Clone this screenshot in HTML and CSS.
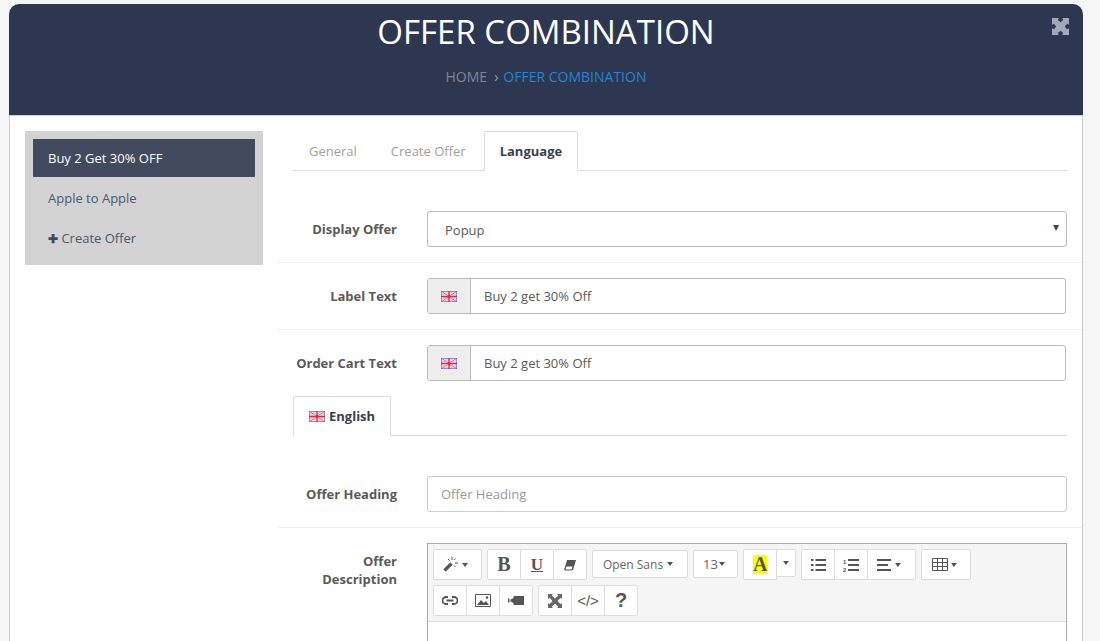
FILE: index.html
```html
<!DOCTYPE html>
<html lang="en">
<head>
<meta charset="utf-8">
<title>Offer Combination</title>
<link rel="stylesheet" href="styles.css">
</head>
<body>
<svg class="defs" width="0" height="0" aria-hidden="true">
  <symbol id="flag" viewBox="0 0 16 11">
    <rect width="16" height="11" fill="#cfcdf0"/>
    <path d="M0 0L16 11M16 0L0 11" stroke="#f3f0fa" stroke-width="2.2"/>
    <path d="M0 0L16 11M16 0L0 11" stroke="#e8485c" stroke-width=".9"/>
    <path d="M8 0V11M0 5.5H16" stroke="#fbe8ea" stroke-width="2.600"/>
    <path d="M8 0V11M0 5.5H16" stroke="#f02236" stroke-width="1.400"/>
    <circle cx="8" cy="5.500" r="1.800" fill="#f02236"/>
    <rect x=".5" y=".5" width="15" height="10" fill="none" stroke="#4a4ac0" stroke-dasharray="1 1"/>
  </symbol>
  <symbol id="expand" viewBox="0 0 14 14">
    <path d="M0 0H5.500L4.800 1.700 7 3.400 9.200 1.700 8.500 0H14V5.500L12.300 4.800 10.600 7 12.300 9.200 14 8.500V14H8.500L9.200 12.300 7 10.600 4.800 12.300 5.500 14H0V8.500L1.700 9.200 3.400 7 1.700 4.800 0 5.500Z"/>
  </symbol>
</svg>
<div class="page">
  <header class="hero">
    <h1 class="hero-title">OFFER COMBINATION</h1>
    <nav class="crumbs"><span class="crumb-home">HOME</span><span class="crumb-sep">›</span><span class="crumb-now">OFFER COMBINATION</span></nav>
    <svg class="hero-expand"><use href="#expand"/></svg>
  </header>
  <main class="panel">
    <aside class="side">
      <a class="side-item side-active">Buy 2 Get 30% OFF</a>
      <a class="side-item">Apple to Apple</a>
      <a class="side-item"><b class="plus">✚</b> Create Offer</a>
    </aside>
    <section class="content">
      <div class="tabs tabs-main">
        <span class="tab">General</span>
        <span class="tab">Create Offer</span>
        <span class="tab tab-on">Language</span>
      </div>
      <div class="row row-first">
        <label class="lbl">Display Offer</label>
        <div class="select">Popup<span class="select-caret">▾</span></div>
      </div>
      <div class="row">
        <label class="lbl">Label Text</label>
        <div class="group">
          <span class="addon"><svg class="flag"><use href="#flag"/></svg></span>
          <span class="group-input">Buy 2 get 30% Off</span>
        </div>
      </div>
      <div class="row row-plain">
        <label class="lbl">Order Cart Text</label>
        <div class="group">
          <span class="addon"><svg class="flag"><use href="#flag"/></svg></span>
          <span class="group-input">Buy 2 get 30% Off</span>
        </div>
      </div>
      <div class="tabs tabs-lang">
        <span class="tab tab-on tab-lang"><svg class="flag"><use href="#flag"/></svg> English</span>
      </div>
      <div class="row row-heading">
        <label class="lbl">Offer Heading</label>
        <div class="input">Offer Heading</div>
      </div>
      <div class="row row-editor">
        <label class="lbl lbl-wrap">Offer Description</label>
        <div class="editor">
          <div class="toolbar">
            <div class="btns">
              <div class="bgroup"><span class="btn w49 pr7"><svg viewBox="0 0 15 15" width="15" height="15"><path d="M1.500 13.500L8.500 6.500" stroke="#555" stroke-width="3.200" fill="none"/><path d="M9 0v3M12.500 1.500l-1.500 1.500M15 6h-3M12.500 10l-1.500-1.500M5 2l1.500 1.500" stroke="#555" fill="none"/></svg><i class="car car-gap"></i></span></div>
              <div class="bgroup"><span class="btn w33 tb">B</span><span class="btn w33 tb tu">U</span><span class="btn w33"><svg viewBox="0 0 14 12" width="14" height="12"><path d="M4 1h9l-3 10H1z" fill="#555"/><path d="M1.800 11L3 7h7l-1 4z" fill="#fff" stroke="#555"/></svg></span></div>
              <div class="bgroup"><span class="btn w96 small pr4">Open Sans<i class="car car-gap"></i></span></div>
              <div class="bgroup"><span class="btn w45 small size">13<i class="car car-tight"></i></span></div>
              <div class="bgroup bgroup-color">
                <span class="btn w34 colorbtn"><span class="color-a">A</span></span>
                <span class="btn w19 caretbtn"><i class="car car-none"></i></span>
              </div>
              <div class="bgroup">
                <span class="btn w33"><svg viewBox="0 0 15 12" width="15" height="12"><path d="M0 0h2.500v2H0zM0 5h2.500v2H0zM0 10h2.500v2H0zM4.500 0H15v2H4.500zM4.500 5H15v2H4.500zM4.500 10H15v2H4.500z" fill="#555"/></svg></span>
                <span class="btn w33"><svg viewBox="0 0 16 14" width="16" height="14"><path d="M5 1h11v2H5zM5 6h11v2H5zM5 11h11v2H5z" fill="#555"/><text x="0" y="5.500" class="ol">1</text><text x="0" y="13.500" class="ol">2</text></svg></span>
                <span class="btn w48 pr5"><svg viewBox="0 0 14 12" width="14" height="12"><path d="M0 0h14v2H0zM0 5h11v2H0zM0 10h14v2H0z" fill="#555"/></svg><i class="car car-gap"></i></span>
              </div>
              <div class="bgroup">
                <span class="btn w50 pr3"><svg viewBox="0 0 16 13" width="16" height="13"><path d="M.5.500h15v12H.500zM5.500.500v12M10.500.500v12M.500 4.500h15M.500 8.500h15" stroke="#555" fill="none"/></svg><i class="car car-near"></i></span>
              </div>
            </div>
            <div class="btns">
              <div class="bgroup">
                <span class="btn w33"><svg viewBox="0 0 16 9" width="16" height="9"><path d="M6 1H4a3.500 3.500 0 0 0 0 7h2M10 1h2a3.500 3.500 0 0 1 0 7h-2M4.500 4.500h7" stroke="#555" stroke-width="1.800" fill="none"/></svg></span>
                <span class="btn w33"><svg viewBox="0 0 16 13" width="16" height="13"><path d="M.5.500h15v12H.500z" fill="none" stroke="#555"/><path d="M2 11l4-5 3 3 2-2 3 4z" fill="#555"/><circle cx="12" cy="3.500" r="1.300" fill="#555"/></svg></span>
                <span class="btn w33"><svg viewBox="0 0 16 9" width="16" height="9"><path d="M5.500 0H16v9H5.500zM0 2.500h1.500v4H0zM2.500 3.500l3-1.500v5l-3-1.500z" fill="#555"/></svg></span>
              </div>
              <div class="bgroup">
                <span class="btn w33"><svg class="mini" viewBox="0 0 14 14"><path d="M0 0h5L3.700 1.300 7 4.600l3.300-3.300L9 0h5v5l-1.300-1.300L9.400 7l3.300 3.300L14 9v5H9l1.300-1.300L7 9.400l-3.300 3.300L5 14H0V9l1.300 1.300L4.600 7 1.300 3.700 0 5z"/></svg></span>
                <span class="btn w33 code">&lt;/&gt;</span>
                <span class="btn w33 help">?</span>
              </div>
            </div>
          </div>
          <div class="editarea"></div>
        </div>
      </div>
    </section>
  </main>
</div>
</body>
</html>
```
FILE: styles.css
```css
* { box-sizing: border-box; }
html, body { margin: 0; height: 641px; overflow: hidden; }
body { background: #f6f6f6; font-family: "Open Sans", sans-serif; font-size: 13px; color: #5a5a5a; }
.defs { position: absolute; }
.page { margin: 4px 17px 0 9px; }

.hero { position: relative; height: 111px; background: #2e3750; border-radius: 10px 10px 0 0; text-align: center; }
.hero-title { margin: 0; padding-top: 7px; font-size: 33px; line-height: 42px; font-weight: 400; color: #fff; }
.crumbs { margin-top: 14px; font-size: 14px; line-height: 20px; }
.crumb-home { color: #7b8696; }
.crumb-sep { color: #98a0ae; margin: 0 5px 0 7px; }
.crumb-now { color: #2285d0; }
.hero-expand { position: absolute; top: 14px; right: 14px; width: 17px; height: 17px; fill: #a1a8b8; }

.panel { display: flex; height: 530px; background: #fff; border: 1px solid #ccc; border-width: 1px 1px 0; border-top-color: #d0d0d0; padding: 15px 0 0 15px; overflow: hidden; }
.side { flex: 0 0 238px; height: 134px; background: #d3d3d3; padding: 8px; }
.side-item { display: flex; align-items: center; height: 38px; margin-bottom: 2px; padding-left: 15px; color: #4c5870; white-space: pre; }
.side-active { background: #414a5e; color: #fff; }
.plus { font-size: 12px; color: #3f4a60; }

.content { flex: 1; margin-left: 15px; min-width: 0; }
.tabs { display: flex; gap: 2px; margin: 0 15px; border-bottom: 1px solid #ddd; }
.tabs-main { height: 40px; }
.tab { padding: 0 16px; height: 40px; line-height: 40px; color: #a0a0a0; }
.tab-on { background: #fff; border: 1px solid #ddd; border-bottom-color: #fff; border-radius: 2px 2px 0 0; color: #3b3f4c; font-weight: 700; margin-bottom: -1px; line-height: 39px; height: 41px; padding: 0 15px; }
.tabs-main .tab-on { height: 40px; }
.tabs-lang { height: 40px; margin-top: 15px; }
.tab-lang { display: flex; align-items: center; gap: 4px; }

.row { display: flex; padding: 15px 16px 15px 0; border-bottom: 1px solid #eee; }
.row-first { padding-top: 40px; }
.row-plain { border-bottom: 0; padding-bottom: 0; }
.row-heading { padding-top: 40px; }
.row-editor { border-bottom: 0; }
.lbl { flex: 0 0 149px; padding-right: 30px; text-align: right; line-height: 36px; font-weight: 700; white-space: nowrap; }
.lbl-wrap { white-space: normal; line-height: 18px; padding-top: 9px; padding-left: 30px; }
.select, .input { flex: 0 0 640px; height: 36px; line-height: 36px; border: 1px solid #bbb; border-radius: 3px; background: #fff; padding-left: 17px; position: relative; }
.input { border-color: #ccc; color: #999; padding-left: 13px; line-height: 34px; }
.select-caret { position: absolute; right: 7px; top: -3px; font-size: 12px; color: #444; }
.group { flex: 0 0 639px; display: flex; height: 36px; border: 1px solid #bbb; border-radius: 3px; overflow: hidden; }
.addon { flex: 0 0 43px; display: flex; align-items: center; justify-content: center; background: #eee; border-right: 1px solid #bbb; }
.group-input { padding-left: 13px; line-height: 34px; }
.flag { width: 16px; height: 11px; display: block; }

.editor { flex: 0 0 640px; border: 1px solid #aaa; height: 120px; }
.toolbar { background: #f5f5f5; border-bottom: 1px solid #ddd; height: 78px; padding: 5px 5px 0; }
.btns { display: flex; gap: 5px; height: 32px; margin-bottom: 4px; }
.bgroup { display: flex; align-items: flex-start; }
.btn { display: flex; align-items: center; justify-content: center; height: 31px; background: #fff; border: 1px solid #ddd; margin-left: -1px; color: #555; }
.bgroup .btn:first-child { margin-left: 0; border-radius: 2px 0 0 2px; }
.bgroup .btn:last-child { border-radius: 0 2px 2px 0; }
.bgroup .btn:only-child { border-radius: 2px; }
.w33 { width: 34px; } .w34 { width: 34px; } .w19 { width: 20px; } .w45 { width: 45px; } .w48 { width: 49px; } .w49 { width: 49px; } .w50 { width: 50px; } .w96 { width: 96px; }
.pr3 { padding-right: 3px; } .pr4 { padding-right: 4px; } .pr5 { padding-right: 5px; } .pr7 { padding-right: 5px; }
.small { font-size: 12px; height: 28px; margin-top: 1px; color: #666; }
.size { font-size: 13px; padding-right: 3px; }
.tb { font-family: "Liberation Serif", serif; font-size: 20px; font-weight: 700; color: #555; }
.tu { text-decoration: underline; font-size: 17px; }
.car { display: inline-block; width: 0; height: 0; border: 3.500px solid transparent; border-top: 4px solid #555; border-bottom: 0; margin-left: 2px; }
.car-tight { margin-left: 1px; }
.car-none { margin-left: 0; }
.car-near { margin-left: 3px; }
.car-gap { margin-left: 4px; }
.colorbtn { height: 31px; }
.caretbtn { height: 28px; }
.color-a { display: block; width: 14px; height: 19px; background: #ff0; font-family: "Liberation Serif", serif; font-weight: 700; font-size: 20px; line-height: 19px; text-align: center; color: #555; }
.ol { font-size: 6px; font-family: "Liberation Sans", sans-serif; fill: #555; font-weight: 700; }
.mini { width: 14px; height: 14px; fill: #666; }
.code { font-family: "Liberation Sans", sans-serif; font-size: 15px; }
.help { font-family: "Liberation Sans", sans-serif; font-size: 20px; font-weight: 700; }
.editarea { height: 40px; background: #fff; }
```
